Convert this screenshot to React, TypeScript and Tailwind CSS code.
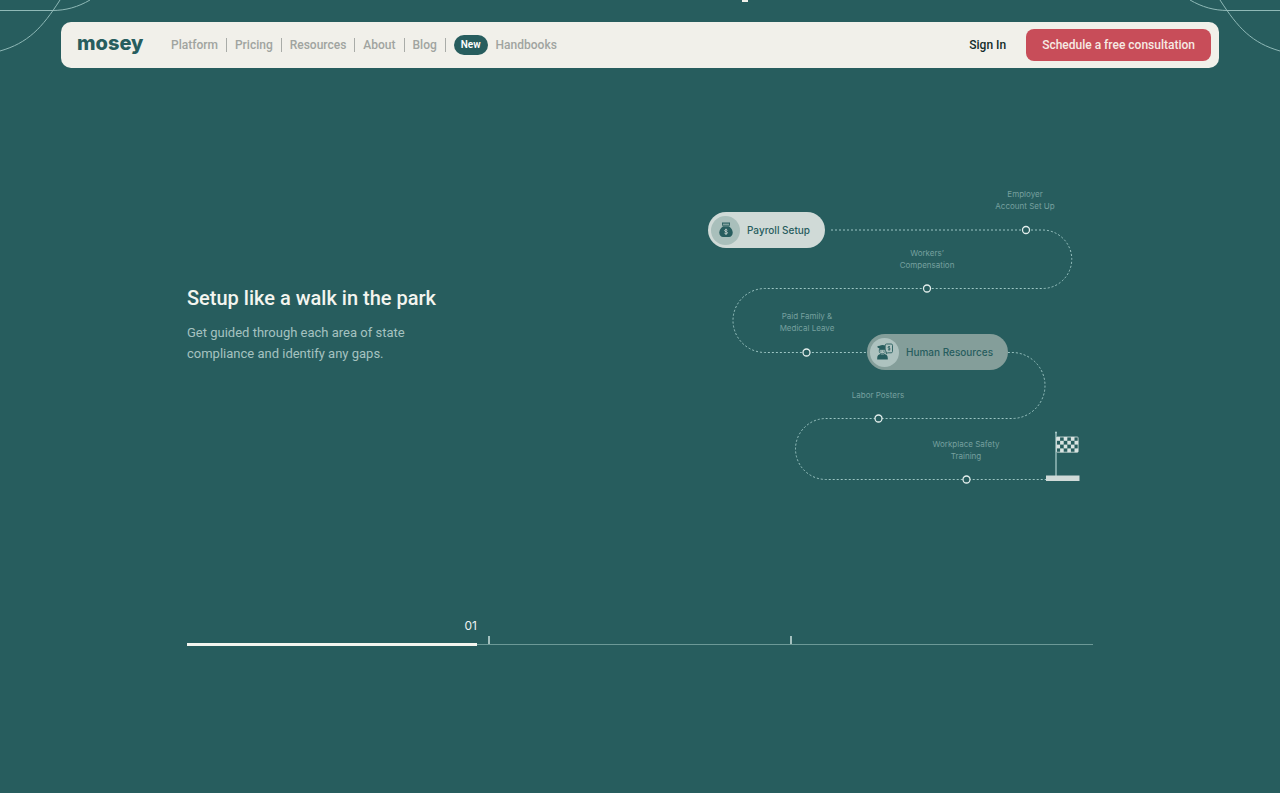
import React from "react";

const links = ["Platform", "Pricing", "Resources", "About", "Blog"];

const stops = [
  { cx: 325, cy: 46 },
  { cx: 226, cy: 104.5 },
  { cx: 105.5, cy: 168.5 },
  { cx: 177.5, cy: 234.5 },
  { cx: 265.5, cy: 295.5 },
];

function BackgroundCurves({ className }: { className: string }) {
  return (
    <svg className={className} width="92" height="56" viewBox="0 0 92 56" fill="none" stroke="#8fb9b7" strokeWidth="1" aria-hidden="true">
      <path d="M0 10.500H52C66 10.500 78 7 90 0" />
      <path d="M0 51C28 43 42 28 60 0" />
    </svg>
  );
}

function MoneyBag() {
  return (
    <svg width="14" height="16" viewBox="0 0 14 16" aria-hidden="true">
      <path d="M3 .5h8v3.200H3z" fill="#275d5e" />
      <path d="M3.800 2.200h6.400" stroke="#a9bfbb" strokeWidth="1" />
      <path d="M4 4.200h6c2.400 1.800 3.700 4.100 3.700 6.400 0 3.100-1.700 4.400-3.700 4.400H4C2 15 .3 13.700.3 10.600.3 8.300 1.600 6 4 4.200z" fill="#275d5e" />
      <path d="M8.400 8.300C8.100 7.800 7.600 7.600 7 7.600c-.8 0-1.400.4-1.400 1 0 1.400 2.900.7 2.900 2.200 0 .7-.7 1.100-1.500 1.100-.7 0-1.300-.3-1.600-.8M7 6.700v6.100" fill="none" stroke="#d0dad7" strokeWidth=".8" />
    </svg>
  );
}

function Worker() {
  return (
    <svg width="18" height="18" viewBox="0 0 18 18" aria-hidden="true">
      <path d="M1.200 3.600c.8-1 1.500-.6 2.400-.9 1.800-1 4.200-1 6 0v4.500l-.6.200H3.300V5.300C2.200 5.300 1.500 4.700 1.200 3.600z" fill="#275d5e" />
      <path d="M3.300 6.600h6v1.900c0 3-6 3-6 0z" fill="#a9bfbb" stroke="#275d5e" strokeWidth=".8" />
      <path d="M4.400 8.200h1M7.200 8.200h1" stroke="#275d5e" strokeWidth=".7" />
      <path d="M1.200 16.500v-1.300c0-2.400 1.300-3.900 3.300-4.200 1 .8 2.900.8 3.800 0 2.200.3 3.500 1.800 3.500 4.200v1.300z" fill="#275d5e" />
      <path d="M9.200 3V2.300c0-.8.5-1.300 1.300-1.300h4.700c.8 0 1.300.5 1.300 1.300v6.200c0 .8-.5 1.300-1.300 1.300h-3.400l-1.400 1V8.500" fill="none" stroke="#275d5e" strokeWidth=".9" />
      <path d="M14 3.800c-.6-.5-2-.4-2 .5 0 1.100 2.200.5 2.200 1.700 0 1-1.600 1.100-2.300.4M13.100 3v4.600" fill="none" stroke="#275d5e" strokeWidth=".8" />
    </svg>
  );
}

function Flag() {
  const cells = [];
  for (let r = 0; r < 4; r++) {
    for (let c = 0; c < 6; c++) {
      if ((r + c) % 2 === 0) {
        cells.push(<rect key={`${r}-${c}`} x={355.5 + c * 3.6} y={253 + r * 3.8} width="3.6" height="3.8" fill="#d9e3e1" />);
      }
    }
  }
  return (
    <g>
      <path d="M355 248V293" stroke="#a8c9c7" strokeWidth="1.3" />
      <circle cx="355" cy="248.5" r="1" fill="#a8c9c7" />
      {cells}
      <rect x="355.5" y="253" width="21.6" height="15.2" rx=".8" fill="none" stroke="#d9e3e1" strokeWidth=".8" />
      <rect x="345" y="291.5" width="33.5" height="5.5" fill="#d0dad8" />
    </g>
  );
}

function Label({ className, children }: { className: string; children: React.ReactNode }) {
  return (
    <p className={`absolute w-24 text-center text-[8px] leading-3 text-[#76a09e] ${className}`}>{children}</p>
  );
}

function Roadmap() {
  return (
    <div className="relative h-[300px] w-[392px] shrink-0 font-['Inter','Liberation_Sans',sans-serif]">
      <svg className="absolute inset-0" width="392" height="300" viewBox="0 0 392 300" fill="none" aria-hidden="true">
        <path
          d="M130 46H341.500A29.250 29.250 0 0 1 341.500 104.500H64A32 32 0 0 0 64 168.500H311A33 33 0 0 1 311 234.500H125A30.500 30.500 0 0 0 125 295.500H345"
          stroke="#9cc5c3"
          strokeWidth="1"
          strokeDasharray="2 2"
        />
        {stops.map((s) => (
          <circle key={s.cx} cx={s.cx} cy={s.cy} r="3.5" fill="#275d5e" stroke="#e3eeec" strokeWidth="1.3" />
        ))}
        <Flag />
      </svg>

      <Label className="left-[276px] top-1">Employer<br />Account Set Up</Label>
      <Label className="left-[178px] top-[63px]">Workers’<br />Compensation</Label>
      <Label className="left-[58px] top-[126px]">Paid Family &amp;<br />Medical Leave</Label>
      <Label className="left-[129px] top-[205px]">Labor Posters</Label>
      <Label className="left-[217px] top-[254px]">Workplace Safety<br />Training</Label>

      <div className="absolute left-[7px] top-7 flex h-9 items-center gap-[7px] rounded-full bg-[#d0dad7] pl-[3px] pr-[15px]">
        <span className="flex size-[29px] items-center justify-center rounded-full bg-[#a9bfbb]"><MoneyBag /></span>
        <span className="text-[10px] font-medium text-[#275d5e]">Payroll Setup</span>
      </div>
      <div className="absolute left-[166px] top-[150px] flex h-9 items-center gap-[7px] rounded-full bg-[#849e9a] pl-[3px] pr-[15px]">
        <span className="flex size-[29px] items-center justify-center rounded-full bg-[#adc2bf]"><Worker /></span>
        <span className="text-[10px] font-medium text-[#275d5e]">Human Resources</span>
      </div>
    </div>
  );
}

export default function App() {
  return (
    <div className="relative min-h-screen overflow-hidden bg-[#275d5e] pt-[22px] font-['Roboto','Liberation_Sans',sans-serif]">
      <BackgroundCurves className="absolute left-0 top-0" />
      <BackgroundCurves className="absolute right-0 top-0 -scale-x-100" />
      <span className="absolute left-[58%] top-0 h-0.5 w-1.5 bg-[#f1f0ea]" />

      <header className="relative mx-[61px] flex h-[46px] items-center justify-between rounded-[10px] bg-[#f1f0ea] pl-4 pr-2">
        <div className="flex items-center">
          <a href="#home" className="mr-7 w-[66px] pb-1 font-['Inter','Liberation_Sans',sans-serif] text-[20px] leading-6 font-extrabold text-[#275d5e]">mosey</a>
          <nav className="flex items-center text-[12px] font-medium text-[#a0a4a0]">
            {links.map((l) => (
              <React.Fragment key={l}>
                <a href={`#${l.toLowerCase()}`}>{l}</a>
                <span className="mx-2 h-3.5 w-px bg-[#a9aca8]" />
              </React.Fragment>
            ))}
            <a href="#handbooks" className="flex items-center gap-2">
              <span className="rounded-full bg-[#275d5e] px-[7px] text-[10px] leading-5 font-semibold text-white">New</span>
              Handbooks
            </a>
          </nav>
        </div>
        <div className="flex items-center gap-5 text-[12px] font-medium">
          <a href="#sign-in" className="text-[#142c2b]">Sign In</a>
          <button type="button" className="h-8 rounded-lg bg-[#c84d59] px-4 text-[#f6eae4]">Schedule a free consultation</button>
        </div>
      </header>

      <main className="px-[187px] pt-[116px]">
        <section className="flex items-start justify-between">
          <div className="pt-[100px]">
            <h1 className="text-[20px] leading-7 font-medium text-[#f3f5ef]">Setup like a walk in the park</h1>
            <p className="mt-[10px] text-[13px] leading-[21px] text-[#a5c2c0]">
              Get guided through each area of state
              <br />
              compliance and identify any gaps.
            </p>
          </div>
          <Roadmap />
        </section>

        <section className="mt-[134px]">
          <div className="grid grid-cols-3 border-b border-[#6c9997]">
            <div className="relative h-[26px] pr-3 text-right font-['Inter','Liberation_Sans',sans-serif] text-[12px] leading-4 text-[#eef3f1]">
              01
              <span className="absolute -bottom-0.5 left-0 right-3 h-[3px] bg-[#f3f5ef]" />
            </div>
            <div className="flex items-end justify-between">
              <span className="-ml-px h-2 w-0.5 bg-[#a3c0be]" />
              <span className="-mr-px h-2 w-0.5 bg-[#a3c0be]" />
            </div>
          </div>
        </section>
      </main>
    </div>
  );
}
